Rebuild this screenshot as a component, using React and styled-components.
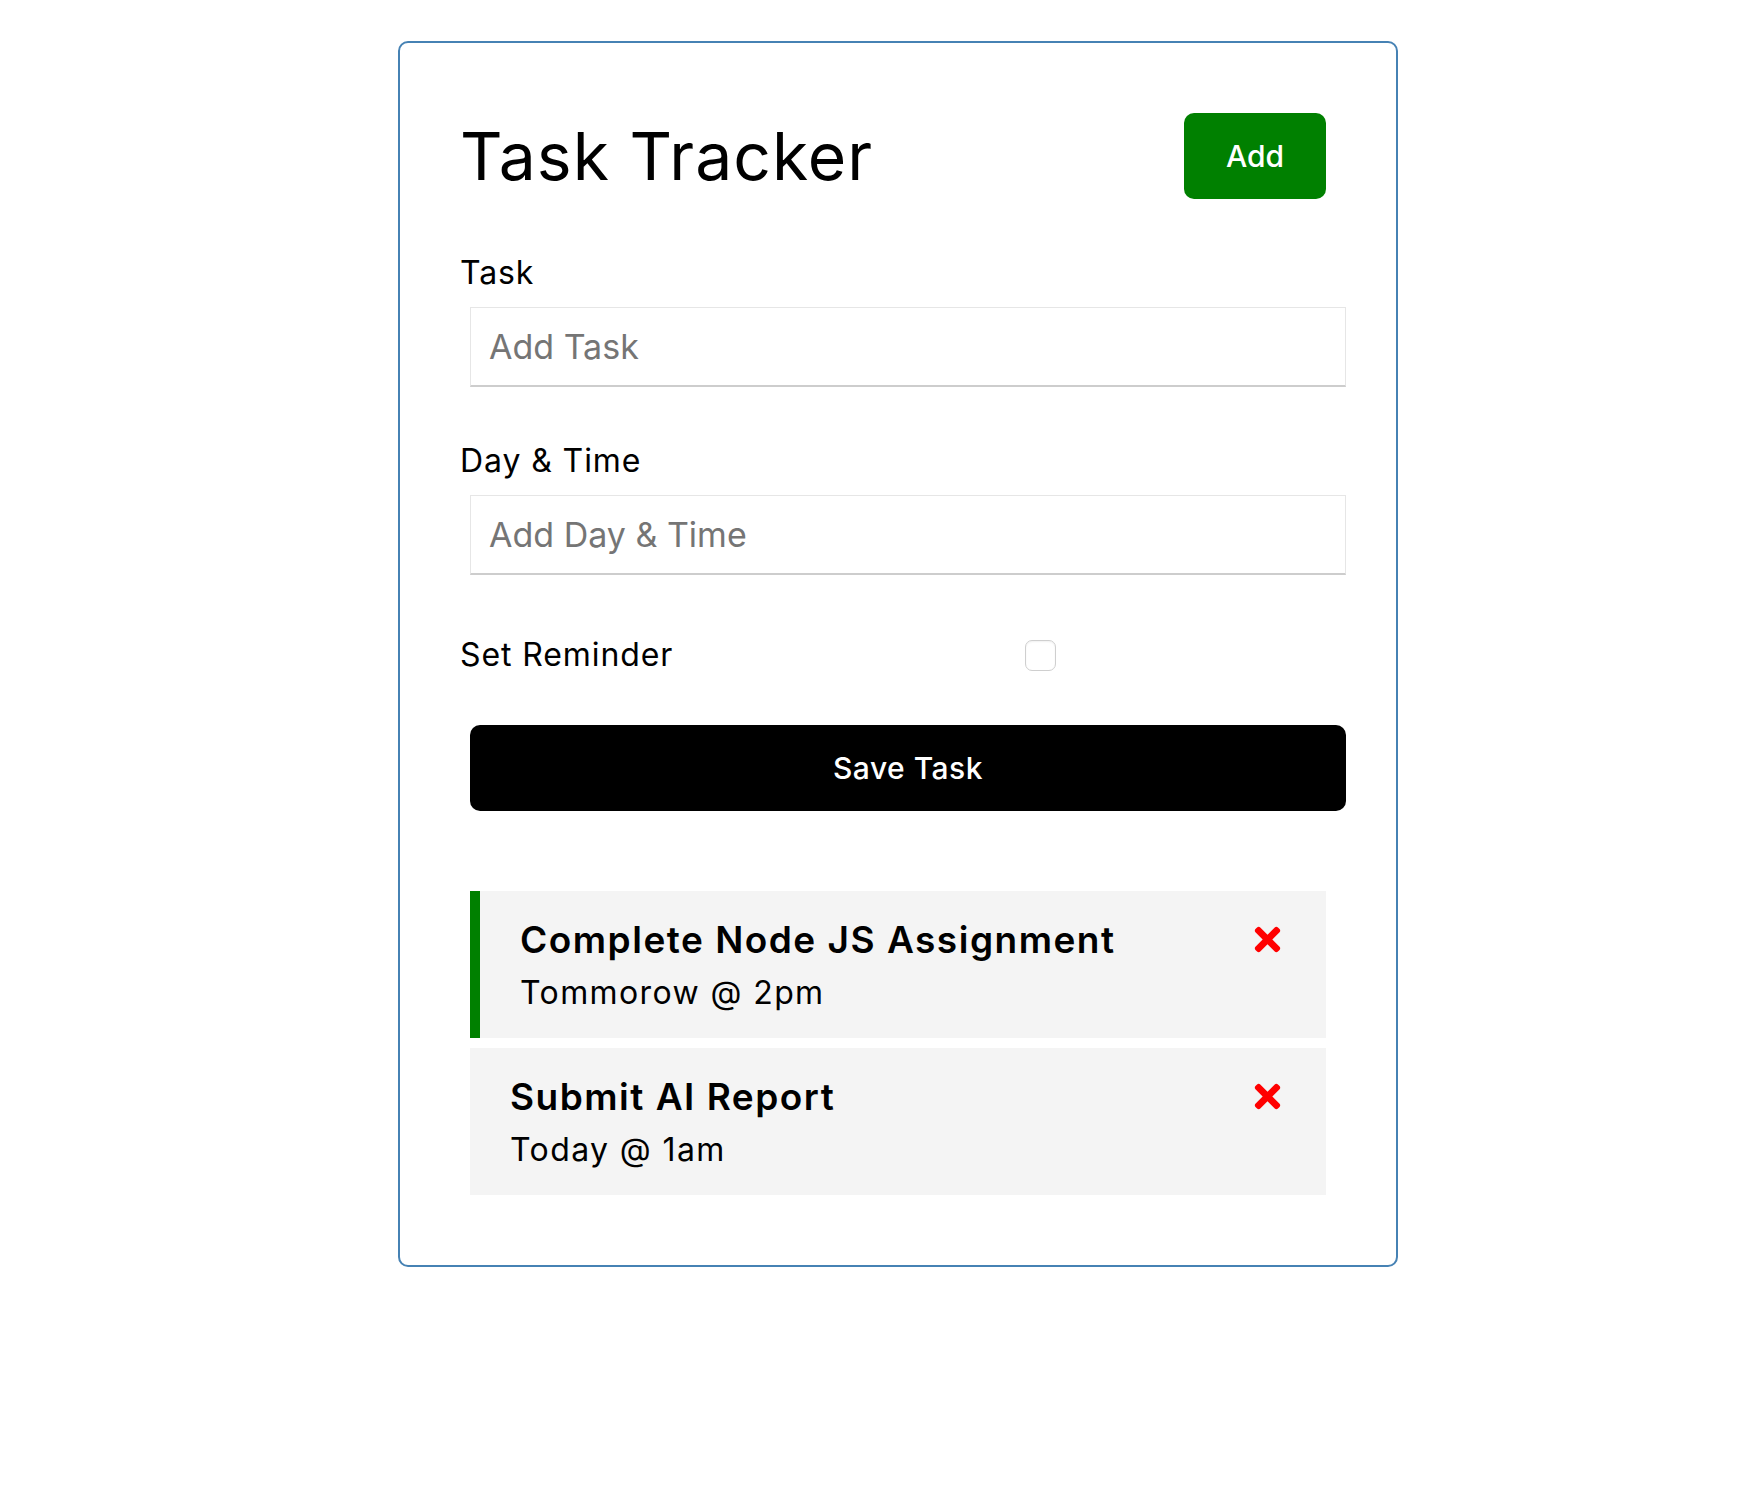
import React, { useState } from 'react';
import styled, { createGlobalStyle } from 'styled-components';
import { FaTimes } from 'react-icons/fa';

const GlobalStyle = createGlobalStyle`
  * {
    box-sizing: border-box;
    margin: 0;
    padding: 0;
  }

  body {
    background: #fff;
    color: #000;
    font-family: Inter, "Open Sans", sans-serif;
  }
`;

const Container = styled('div')`
  width: 1000px;
  margin: 41px 0 41px 398px;
  border: 2px solid steelblue;
  border-radius: 10px;
  padding: 60px;
`;

const Header = styled('header')`
  display: flex;
  justify-content: space-between;
  align-items: center;
  margin-bottom: 40px;
`;

const Title = styled('h1')`
  font-size: 66px;
  font-weight: 400;
  line-height: 96px;
  letter-spacing: 1px;
`;

const Button = styled('button')`
  display: ${props => (props.$block ? 'block' : 'inline-block')};
  width: ${props => (props.$block ? '100%' : 'auto')};
  height: 86px;
  margin: 10px;
  padding: 0 42px;
  border: none;
  border-radius: 10px;
  background: ${props => props.$color || '#000'};
  color: #fff;
  font-family: inherit;
  font-size: 30px;
  font-weight: 500;
  letter-spacing: ${props => (props.$block ? '0.5px' : '0')};
  cursor: pointer;
`;

const Form = styled('form')`
  margin-bottom: 80px;
`;

const FormControl = styled('div')`
  margin: 40px 0;
`;

const CheckControl = styled(FormControl)`
  display: flex;
  align-items: center;
  justify-content: space-between;
`;

const Label = styled('label')`
  display: block;
  flex: 1;
  font-size: 32px;
  line-height: 48px;
  letter-spacing: 0.9px;
`;

const Input = styled('input')`
  display: inline-block;
  vertical-align: top;
  width: 100%;
  height: 80px;
  margin: 10px;
  padding: 0 18px;
  border: 1px solid #e6e6e6;
  border-bottom: 2px solid #cdcdcd;
  font-family: Inter, sans-serif;
  font-size: 34px;
  color: #000;
  outline: none;

  &::placeholder {
    color: #757575;
  }
`;

const CheckWrap = styled('div')`
  flex: 2;
  display: flex;
  justify-content: center;
  align-items: center;
  height: 40px;
  margin: 10px;
`;

const Checkbox = styled('input')`
  appearance: none;
  width: 31px;
  height: 31px;
  border: 1px solid #cfcfcf;
  border-radius: 7px;
  background: #fff;
  box-shadow: inset 0 1px 2px rgba(0, 0, 0, 0.06);
  cursor: pointer;

  &:checked {
    background: #1a73e8;
    border-color: #1a73e8;
  }
`;

const TaskItem = styled('div')`
  margin: 10px;
  padding: 20px 40px;
  background: #f4f4f4;
  border-left: ${props => (props.$reminder ? '10px solid green' : 'none')};
  cursor: pointer;
`;

const TaskTitle = styled('h3')`
  display: flex;
  align-items: center;
  justify-content: space-between;
  font-size: 37px;
  font-weight: 600;
  line-height: 57px;
  letter-spacing: 1.5px;
`;

const TaskTime = styled('p')`
  font-size: 32px;
  line-height: 50px;
  letter-spacing: 1.4px;
`;

const DeleteIcon = styled(FaTimes)`
  color: red;
  width: 37px;
  height: 37px;
  flex-shrink: 0;
`;

const initialTasks = [
  { id: 1, text: 'Complete Node JS Assignment', day: 'Tommorow @ 2pm', reminder: true },
  { id: 2, text: 'Submit AI Report', day: 'Today @ 1am', reminder: false },
];

export default function App() {
  const [tasks, setTasks] = useState(initialTasks);
  const [text, setText] = useState('');
  const [day, setDay] = useState('');
  const [reminder, setReminder] = useState(false);

  const onSubmit = (e) => {
    e.preventDefault();
    if (!text) return;
    setTasks([...tasks, { id: Date.now(), text, day, reminder }]);
    setText('');
    setDay('');
    setReminder(false);
  };

  const deleteTask = (id) => setTasks(tasks.filter((t) => t.id !== id));
  const toggleReminder = (id) =>
    setTasks(tasks.map((t) => (t.id === id ? { ...t, reminder: !t.reminder } : t)));

  return (
    <>
      <GlobalStyle />
      <Container>
        <Header>
          <Title>Task Tracker</Title>
          <Button $color="green">Add</Button>
        </Header>
        <Form onSubmit={onSubmit}>
          <FormControl>
            <Label>Task</Label>
            <Input type="text" placeholder="Add Task" value={text} onChange={(e) => setText(e.target.value)} />
          </FormControl>
          <FormControl>
            <Label>Day &amp; Time</Label>
            <Input type="text" placeholder="Add Day & Time" value={day} onChange={(e) => setDay(e.target.value)} />
          </FormControl>
          <CheckControl>
            <Label>Set Reminder</Label>
            <CheckWrap>
              <Checkbox type="checkbox" checked={reminder} onChange={(e) => setReminder(e.target.checked)} />
            </CheckWrap>
          </CheckControl>
          <Button type="submit" $block>Save Task</Button>
        </Form>
        {tasks.map((task) => (
          <TaskItem key={task.id} $reminder={task.reminder} onDoubleClick={() => toggleReminder(task.id)}>
            <TaskTitle>
              {task.text}
              <DeleteIcon onClick={() => deleteTask(task.id)} />
            </TaskTitle>
            <TaskTime>{task.day}</TaskTime>
          </TaskItem>
        ))}
      </Container>
    </>
  );
}
